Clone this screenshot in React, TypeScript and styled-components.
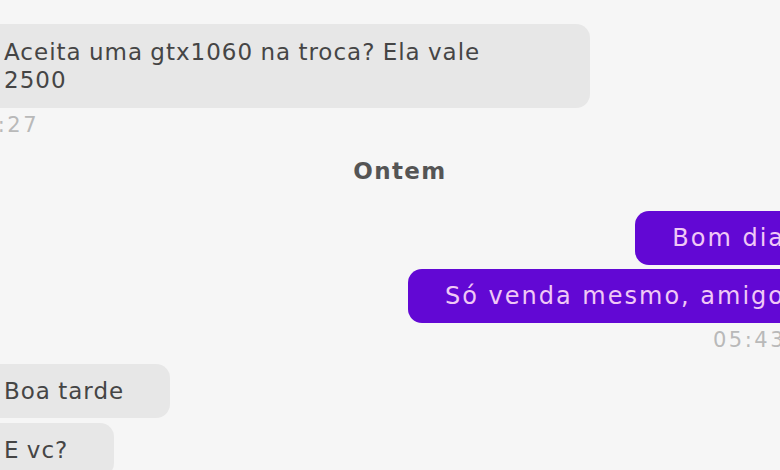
import React from 'react';
import styled, { createGlobalStyle } from 'styled-components';

const GlobalStyle = createGlobalStyle`
  html, body {
    margin: 0;
    padding: 0;
    background: #f6f6f6;
    overflow: hidden;
  }
  body {
    font-family: "DejaVu Sans", "Liberation Sans", sans-serif;
  }
`;

const Screen = styled.div`
  width: 780px;
  height: 470px;
  overflow: hidden;
  background: #f6f6f6;
`;

const Thread = styled.div`
  display: flex;
  flex-direction: column;
  margin: 24px -40px 0 -20px;
`;

const Bubble = styled.div<{ $mine?: boolean; $gap?: number; $wide?: boolean }>`
  align-self: ${p => (p.$mine ? 'flex-end' : 'flex-start')};
  width: ${p => (p.$wide ? '610px' : 'auto')};
  box-sizing: border-box;
  margin-top: ${p => p.$gap ?? 0}px;
  padding: ${p => (p.$mine ? '13px 35px 13px 37px' : p.$wide ? '14px 90px 14px 24px' : '13px 46px 13px 24px')};
  border-radius: 14px;
  background: ${p => (p.$mine ? '#6208d4' : '#e7e7e7')};
  color: ${p => (p.$mine ? '#f0c8f6' : '#454545')};
  font-size: ${p => (p.$mine ? '24px' : '23px')};
  line-height: 28px;
  letter-spacing: ${p => (p.$mine ? '2px' : '1px')};
  word-spacing: ${p => (p.$mine ? '0' : '-1px')};
  white-space: ${p => (p.$mine ? 'nowrap' : 'normal')};
`;

const Stamp = styled.div<{ $mine?: boolean }>`
  align-self: ${p => (p.$mine ? 'flex-end' : 'flex-start')};
  margin: ${p => (p.$mine ? '5px 34px 0 0' : '5px 0 0 -14px')};
  color: #b9b9b9;
  font-size: 21px;
  line-height: 24px;
  letter-spacing: 2.5px;
`;

const DayDivider = styled.div`
  align-self: center;
  margin-top: 20px;
  color: #555;
  font-size: 23px;
  font-weight: 600;
  letter-spacing: 1.4px;
  line-height: 28px;
`;

export default function App() {
  return (
    <>
      <GlobalStyle />
      <Screen>
        <Thread>
          <Bubble $wide>Aceita uma gtx1060 na troca? Ela vale 2500</Bubble>
          <Stamp>05:27</Stamp>
          <DayDivider>Ontem</DayDivider>
          <Bubble $mine $gap={26}>Bom dia</Bubble>
          <Bubble $mine $gap={4}>Só venda mesmo, amigo</Bubble>
          <Stamp $mine>05:43</Stamp>
          <Bubble $gap={12}>Boa tarde</Bubble>
          <Bubble $gap={5}>E vc?</Bubble>
        </Thread>
      </Screen>
    </>
  );
}
